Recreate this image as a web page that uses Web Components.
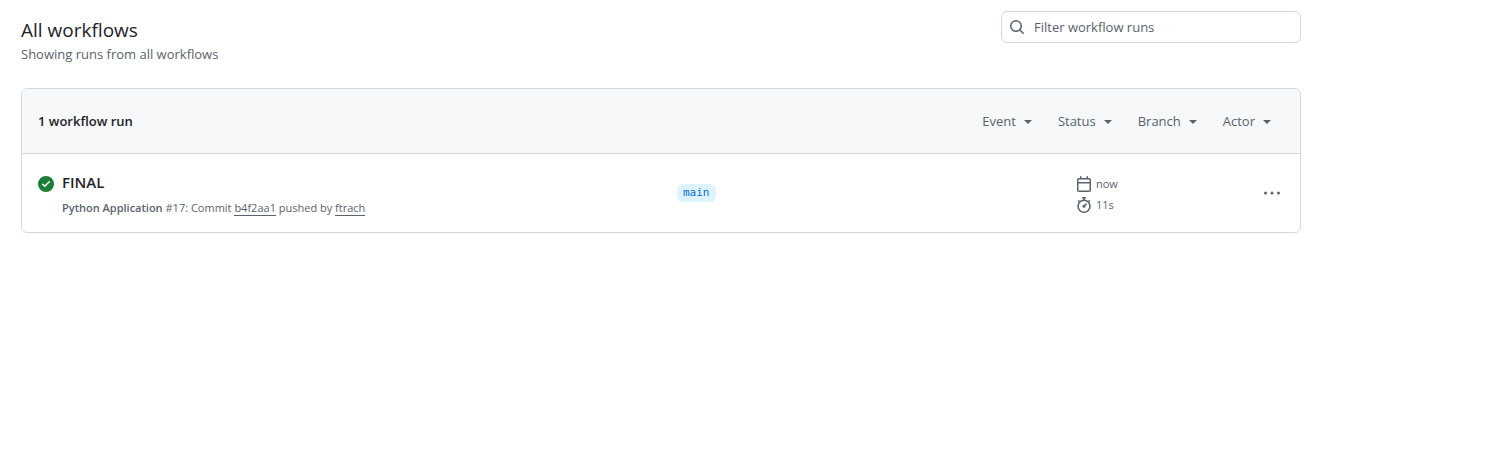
<!DOCTYPE html>
<html lang="en">
<head>
<meta charset="utf-8">
<title>All workflows</title>
<style>
body { margin: 0; background: #fff; color: #1f2328; font: 13px/20px "Open Sans", "Noto Sans", sans-serif; }
</style>
</head>
<body>
<workflow-page></workflow-page>
<script>
const ICONS = {
  search: 'M10.68 11.74a6 6 0 0 1-7.922-8.982 6 6 0 0 1 8.982 7.922l3.04 3.04a.749.749 0 0 1-.326 1.275.749.749 0 0 1-.734-.215ZM11.5 7a4.499 4.499 0 1 0-8.997 0A4.499 4.499 0 0 0 11.5 7Z',
  success: 'M8 16A8 8 0 1 1 8 0a8 8 0 0 1 0 16Zm3.78-9.72a.751.751 0 0 0-.018-1.042.751.751 0 0 0-1.042-.018L6.75 9.19 5.28 7.72a.751.751 0 0 0-1.042.018.751.751 0 0 0-.018 1.042l2 2a.75.75 0 0 0 1.06 0Z',
  calendar: 'M4.75 0a.75.75 0 0 1 .75.75V2h5V.75a.75.75 0 0 1 1.5 0V2h1.25c.966 0 1.75.784 1.75 1.75v10.5A1.75 1.75 0 0 1 13.25 16H2.75A1.75 1.75 0 0 1 1 14.25V3.75C1 2.784 1.784 2 2.75 2H4V.75A.75.75 0 0 1 4.75 0ZM2.5 7.5v6.75c0 .138.112.25.25.25h10.5a.25.25 0 0 0 .25-.25V7.5Zm10.75-4H2.75a.25.25 0 0 0-.25.25V6h11V3.75a.25.25 0 0 0-.25-.25Z',
  stopwatch: 'M5.75.75A.75.75 0 0 1 6.5 0h3a.75.75 0 0 1 0 1.5h-.75v1l-.001.041a6.724 6.724 0 0 1 3.464 1.435l.007-.006.75-.75a.749.749 0 0 1 1.275.326.749.749 0 0 1-.215.734l-.75.75-.006.007a6.75 6.75 0 1 1-10.548 0L2.72 5.03l-.75-.75a.751.751 0 0 1 .018-1.042.751.751 0 0 1 1.042-.018l.75.75.007.006A6.72 6.72 0 0 1 7.25 2.541V1.5H6.5a.75.75 0 0 1-.75-.75ZM8 14.5a5.25 5.25 0 1 0-.001-10.501A5.25 5.25 0 0 0 8 14.5Zm.389-6.7 1.33-1.33a.75.75 0 1 1 1.061 1.06L9.45 8.861A1.503 1.503 0 0 1 8 10.75a1.499 1.499 0 1 1 .389-2.95Z',
  more: 'M0 8a1.5 1.5 0 1 0 3 0 1.5 1.5 0 0 0-3 0Zm6.5 0a1.5 1.5 0 1 0 3 0 1.5 1.5 0 0 0-3 0ZM13 8a1.5 1.5 0 1 0 3 0 1.5 1.5 0 0 0-3 0Z'
};

function define(name, html, setup) {
  const template = document.createElement('template');
  template.innerHTML = html;
  customElements.define(name, class extends HTMLElement {
    connectedCallback() {
      if (this.shadowRoot) return;
      this.attachShadow({ mode: 'open' }).append(template.content.cloneNode(true));
      if (setup) setup(this, this.shadowRoot);
    }
  });
}

define('ui-icon', `
  <style>
    :host { display: block; flex: none; width: 16px; height: 16px; }
    svg { display: block; fill: currentColor; }
  </style>
  <svg width="16" height="16" viewBox="0 0 16 16" aria-hidden="true"><path></path></svg>`,
  (el, root) => root.querySelector('path').setAttribute('d', ICONS[el.getAttribute('name')]));

define('search-field', `
  <style>
    :host { display: block; flex: 0 1 300px; }
    label { display: flex; align-items: center; gap: 9px; box-sizing: border-box; height: 32px;
      padding: 0 7px; border: 1px solid #d1d9e0; border-radius: 6px; color: #59636e; }
    input { flex: 1; min-width: 0; padding: 0; border: 0; outline: 0; background: none;
      font: inherit; color: #1f2328; }
    input::placeholder { color: #59636e; opacity: 1; }
  </style>
  <label><ui-icon name="search"></ui-icon><input type="text" placeholder="Filter workflow runs" aria-label="Filter workflow runs"></label>`);

define('page-heading', `
  <style>
    :host { display: flex; justify-content: space-between; align-items: flex-start; gap: 24px; }
    .text { padding-top: 5px; }
    h1 { margin: 0; font-size: 19px; font-weight: 400; line-height: 28px; }
    p { margin: 0; color: #59636e; }
  </style>
  <div class="text"><h1><slot name="title"></slot></h1><p><slot name="subtitle"></slot></p></div>
  <search-field></search-field>`);

define('filter-menu', `
  <style>
    :host { display: block; }
    button { display: flex; align-items: center; gap: 8px; padding: 0; border: 0; background: none;
      font: inherit; color: #59636e; cursor: pointer; }
    i { margin-top: 2px; border: 4px solid transparent; border-top-color: currentColor; border-bottom: 0; }
  </style>
  <button type="button" aria-haspopup="menu"><slot></slot><i></i></button>`);

define('branch-label', `
  <style>
    :host { display: block; }
    a { display: block; width: fit-content; padding: 0 6px; border-radius: 6px; background: #ddf4ff; color: #0969da;
      font: 11px/18px "DejaVu Sans Mono", monospace; text-decoration: none; }
  </style>
  <a href="#"><slot></slot></a>`);

define('run-row', `
  <style>
    :host { display: grid; grid-template-columns: 639fr 399fr 208fr; align-items: center;
      padding: 15px 16px; color: #59636e; font-size: 11px; }
    .main { display: flex; gap: 8px; }
    .main ui-icon { margin-top: 7px; color: #1a7f37; }
    h2 { margin: 0 0 4px; font-size: 15px; font-weight: 600; line-height: 26px; color: #1f2328; }
    h2 a { color: inherit; text-decoration: none; }
    .meta { line-height: 18px; }
    b { font-weight: 600; }
    .end { display: flex; align-items: center; justify-content: space-between; }
    ul { margin: 0; padding: 2px 0 0; list-style: none; }
    li { display: flex; align-items: center; gap: 4px; line-height: 21px; }
    button { display: flex; padding: 4px; border: 0; background: none; color: inherit; cursor: pointer; }
  </style>
  <div class="main">
    <ui-icon name="success"></ui-icon>
    <div><h2><a href="#"><slot name="title"></slot></a></h2><div class="meta"><b><slot name="workflow"></slot></b> <slot></slot></div></div>
  </div>
  <branch-label><slot name="branch"></slot></branch-label>
  <div class="end">
    <ul>
      <li><ui-icon name="calendar"></ui-icon><slot name="time"></slot></li>
      <li><ui-icon name="stopwatch"></ui-icon><slot name="duration"></slot></li>
    </ul>
    <button type="button" aria-label="Show options"><ui-icon name="more"></ui-icon></button>
  </div>`);

define('commit-link', `
  <style>
    :host { display: inline; }
    a { color: inherit; text-decoration: none; border-bottom: 1px solid; }
  </style>
  <a href="#"><slot></slot></a>`);

define('runs-box', `
  <style>
    :host { display: block; border: 1px solid #d1d9e0; border-radius: 6px; overflow: hidden; }
    header { display: flex; align-items: center; justify-content: space-between;
      padding: 22px 29px 22px 16px; background: #f6f8fa; border-bottom: 1px solid #d1d9e0; }
    strong { font-weight: 600; }
    nav { display: flex; gap: 26px; }
  </style>
  <header><strong><slot name="count"></slot></strong><nav><slot name="filters"></slot></nav></header>
  <slot></slot>`);

define('workflow-page', `
  <style>
    :host { display: block; max-width: 1280px; padding: 11px 21px 24px; }
    page-heading { margin-bottom: 24px; }
  </style>
  <page-heading><span slot="title">All workflows</span><span slot="subtitle">Showing runs from all workflows</span></page-heading>
  <runs-box>
    <span slot="count">1 workflow run</span>
    <filter-menu slot="filters">Event</filter-menu>
    <filter-menu slot="filters">Status</filter-menu>
    <filter-menu slot="filters">Branch</filter-menu>
    <filter-menu slot="filters">Actor</filter-menu>
    <run-row>
      <span slot="title">FINAL</span><span slot="workflow">Python Application</span><span>#17: Commit <commit-link>b4f2aa1</commit-link> pushed by <commit-link>ftrach</commit-link></span>
      <span slot="branch">main</span><span slot="time">now</span><span slot="duration">11s</span>
    </run-row>
  </runs-box>`);
</script>
</body>
</html>
